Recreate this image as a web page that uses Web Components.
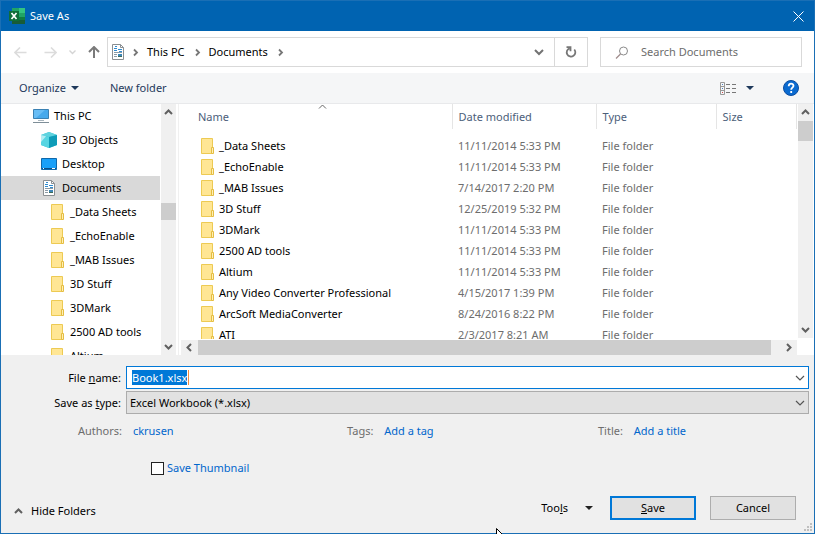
<!DOCTYPE html>
<html lang="en">
<head>
<meta charset="utf-8">
<title>Save As</title>
<style>
  html, body { height: 100%; margin: 0; }
  body { font: 11px/16px "Noto Sans", "Open Sans", sans-serif; color: #000; overflow: hidden; }
</style>
</head>
<body>
<save-dialog></save-dialog>

<template id="save-dialog">
  <style>
    :host { display: flex; flex-direction: column; box-sizing: border-box; height: 100vh; border: 1px solid #1a6fb5; background: #f0f0f0; }
    .panes { flex: 1; min-height: 0; display: grid; grid-template-columns: 178px minmax(0, 1fr); background: #fff; }
    .pointer { position: absolute; left: 496px; top: 528px; }
  </style>
  <title-bar>Save As</title-bar>
  <address-row></address-row>
  <command-bar></command-bar>
  <div class="panes">
    <folder-tree></folder-tree>
    <file-list></file-list>
  </div>
  <save-form></save-form>
  <dialog-footer></dialog-footer>
  <svg class="pointer" width="8" height="6"><path d="M.5 6V.5L6 6" fill="#fff" stroke="#000"/></svg>
</template>

<template id="title-bar">
  <style>
    :host { display: flex; align-items: center; gap: 5px; height: 30px; padding-left: 8px; background: #0063b1; color: #fff; }
    h1 { flex: 1; margin: 0; font: inherit; }
    button { display: grid; place-items: center; width: 31px; height: 30px; padding: 0; border: 0; background: none; color: inherit; }
  </style>
  <svg width="16" height="16" viewBox="0 0 16 16">
    <path fill="#21a366" d="M3 0h7v5H3z"/><path fill="#33c481" d="M10 0h6v5h-6z"/>
    <path fill="#107c41" d="M3 5h7v5H3z"/><path fill="#21a366" d="M10 5h6v4h-6z"/>
    <path fill="#185c37" d="M3 10h13v6H3z"/><path fill="#107c41" d="M10 9h6v3h-6z"/>
    <path fill="#0f6d39" d="M0 3h10v10H0z"/>
    <path d="M2.500 5l5 6M7.500 5l-5 6" stroke="#fff" stroke-width="1.700" fill="none"/>
  </svg>
  <h1><slot></slot></h1>
  <button aria-label="Close"><svg width="11" height="11"><path d="M.5.500l10 10M10.500.500l-10 10" stroke="#fff" fill="none"/></svg></button>
</template>

<template id="address-row">
  <style>
    :host { display: flex; align-items: center; height: 42px; padding: 0 12px 0 8px; background: #fff; }
    button { display: grid; place-items: center; padding: 0; border: 0; background: none; height: 28px; color: #6d6d6d; font: inherit; }
    .nav { width: 22px; }
    .back { margin-right: 8px; }
    .path { flex: 1; display: flex; align-items: center; height: 28px; margin: 0 12px 0 2px; border: 1px solid #d9d9d9; padding-left: 3px; }
    .path a { color: #000; text-decoration: none; margin: 0 10px 0 9px; }
    .path doc-icon { margin-right: 8px; }
    .grow { flex: 1; }
    .drop { width: 30px; }
    .refresh { width: 33px; border-left: 1px solid #d9d9d9; }
    .search { display: flex; align-items: center; gap: 12px; box-sizing: border-box; width: 202px; height: 30px; border: 1px solid #d9d9d9; padding-left: 14px; }
    input { flex: 1; min-width: 0; border: 0; padding: 0; outline: 0; font: inherit; background: none; }
    input::placeholder { color: #6d6d6d; opacity: 1; }
  </style>
  <button class="nav back" aria-label="Back"><svg width="13" height="11"><path d="M6 .5l-5 5 5 5M1 5.500h11.500" fill="none" stroke="#dcdcdc" stroke-width="1.600"/></svg></button>
  <button class="nav" aria-label="Forward"><svg width="13" height="11"><path d="M7 .5l5 5-5 5M12 5.500H.5" fill="none" stroke="#dcdcdc" stroke-width="1.600"/></svg></button>
  <button class="nav" aria-label="Recent locations"><svg width="7" height="5"><path d="M.5.500l3 3 3-3" fill="none" stroke="#d4d4d4" stroke-width="1.400"/></svg></button>
  <button class="nav" aria-label="Up"><svg width="12" height="12"><path d="M1 6l5-5 5 5M6 1v11" fill="none" stroke="#7a7a7a" stroke-width="2"/></svg></button>
  <nav class="path" aria-label="Address">
    <doc-icon></doc-icon>
    <chevron-icon dir="right"></chevron-icon><a href="#pc">This PC</a>
    <chevron-icon dir="right"></chevron-icon><a href="#documents">Documents</a>
    <chevron-icon dir="right"></chevron-icon><span class="grow"></span>
    <button class="drop" aria-label="Previous locations"><svg width="10" height="7"><path d="M1 1l4 4 4-4" fill="none" stroke="#737373" stroke-width="2"/></svg></button>
    <button class="refresh" aria-label="Refresh"><svg width="12" height="12"><path d="M4.500 2.300A4.300 4.300 0 1 0 9.300 3.500M1.500 1.200h4v4" fill="none" stroke="#777" stroke-width="1.800"/></svg></button>
  </nav>
  <div class="search">
    <svg width="14" height="13"><circle cx="8.500" cy="5" r="4" fill="none" stroke="#8a8a8a"/><path d="M5.500 8L1 12.500" stroke="#a08c8c" stroke-width="1.300"/></svg>
    <input type="search" placeholder="Search Documents" aria-label="Search Documents">
  </div>
</template>

<template id="command-bar">
  <style>
    :host { display: flex; align-items: center; box-sizing: border-box; height: 31px; padding: 0 15px 0 18px; background: #f5f6f7; border-bottom: 1px solid #e8e9eb; }
    button { display: flex; align-items: center; gap: 5px; padding: 0; border: 0; background: none; color: #1e395b; font: inherit; }
    .new { margin-left: 31px; }
    .view { margin-left: auto; gap: 9px; }
    .help { margin-left: 29px; }
  </style>
  <button>Organize <svg width="8" height="4"><path d="M0 0h8L4 4z" fill="#1e395b"/></svg></button>
  <button class="new">New folder</button>
  <button class="view" aria-label="Change view">
    <svg width="17" height="13">
      <path d="M.5.500h4v12h-4zM.5 4.500h4M.5 8.500h4" fill="none" stroke="#989898"/>
      <path d="M2 2h1v1H2z" fill="#4a7fc0"/><path d="M2 6h1v1H2z" fill="#4a7fc0"/><path d="M2 10h1v1H2z" fill="#d04848"/>
      <path d="M6 2.500h4M12 2.500h4M6 6.500h4M12 6.500h4M6 10.500h4M12 10.500h4" stroke="#777"/>
    </svg>
    <svg width="8" height="4"><path d="M0 0h8L4 4z" fill="#1e395b"/></svg>
  </button>
  <button class="help" aria-label="Help">
    <svg width="16" height="16"><circle cx="8" cy="8" r="7.500" fill="#0a6ad0" stroke="#0b4da0"/><path d="M5.700 6.200C5.700 2.800 10.500 3 10.500 5.800 10.500 7.700 8.200 7.700 8.200 9.800M8.200 11v2" fill="none" stroke="#fff" stroke-width="1.800"/></svg>
  </button>
</template>

<template id="doc-icon">
  <style>:host { display: block; width: 14px; height: 16px; } svg { display: block; }</style>
  <svg width="14" height="16">
    <path d="M1.500.500h8l3 3v12h-11z" fill="#fff" stroke="#8b8f92"/><path d="M9.500.500v3h3" fill="none" stroke="#8b8f92"/>
    <path d="M3 4.500h3M4 2.500h2M7 5.500h4M3 6.500h3M8 7.500h3" stroke="#2f8bd0"/>
    <path d="M3 8.500h8M3 10.500h3M3 12.500h3" stroke="#8b9aa5"/><path d="M7 10h4v3H7z" fill="#3e86b8"/><path d="M7 12h4v1H7z" fill="#3b6b57"/>
  </svg>
</template>

<template id="folder-icon">
  <style>:host { display: block; width: 13px; height: 16px; } svg { display: block; }</style>
  <svg width="13" height="16">
    <path d="M.5.500h11v15H.5z" fill="#ffe694" stroke="#edca53"/>
    <path d="M10.500 9.500h2v6h-2z" fill="#fff0b4" stroke="#e5bd42"/>
  </svg>
</template>

<template id="pc-icon">
  <style>:host { display: block; width: 16px; height: 16px; } svg { display: block; }</style>
  <svg width="16" height="16"><path d="M.5 1.500h15v9H.5z" fill="#46a9ec" stroke="#3a81b3"/><path d="M1 2h11L3 10H1z" fill="#68bdf5"/><path d="M5 12.500h6" stroke="#a8b5bd"/><path d="M0 14.500h16" stroke="#7e8e98"/></svg>
</template>
<template id="cube-icon">
  <style>:host { display: block; width: 16px; height: 16px; } svg { display: block; }</style>
  <svg width="16" height="16"><path d="M8 0l8 3v10l-8 3-8-3V3z" fill="#36c3d8"/><path d="M8 0l8 3-8 2-8-2z" fill="#5fd3de"/><path d="M8 5l8-2v10l-8 3z" fill="#0e9cb8"/><path d="M0 3l8 2v11l-8-3z" fill="#57d5e2"/><path d="M0 3l5 1.300L0 10z" fill="#b3eef4"/></svg>
</template>
<template id="desktop-icon">
  <style>:host { display: block; width: 16px; height: 16px; } svg { display: block; }</style>
  <svg width="16" height="16"><path d="M.5 2.500h15v11H.5z" fill="#19a0f8" stroke="#0f68aa"/><path d="M1 12h14v1H1z" fill="#0a4f87"/><path d="M2 12h1v1H2zM11 12h3v1h-3z" fill="#fff"/></svg>
</template>

<template id="chevron-icon">
  <style>
    :host { display: block; width: 9px; height: 9px; }
    svg { display: block; width: 9px; height: 9px; overflow: visible; }
    :host([dir="right"]) { width: 5px; }
    :host([dir="right"]) svg { transform: rotate(90deg); margin-left: -2px; }
    :host([dir="left"]) svg { transform: rotate(-90deg); }
    :host([dir="east"]) svg { transform: rotate(90deg); }
    :host([dir="down"]) svg { transform: rotate(180deg); }
    path { fill: none; stroke: #606060; stroke-width: 2; }
    :host([dir="right"]) path { stroke: #777; d: path("M1.500 6L4.500 3 7.500 6"); stroke-width: 1.800; }
  </style>
  <svg viewBox="0 0 9 9"><path d="M1 6l3.500-3.500L8 6"/></svg>
</template>

<template id="scroll-bar">
  <style>
    :host { display: flex; flex-direction: column; background: #f0f0f0; }
    :host([horizontal]) { flex-direction: row; }
    button { flex: none; display: grid; place-items: center; width: 15px; height: 17px; border: 0; padding: 0; background: none; }
    :host([horizontal]) button { width: 17px; height: 15px; }
    .track { flex: 1; display: flex; flex-direction: inherit; }
    .before { flex: var(--before, 0); }
    .thumb { flex: var(--thumb, 1); background: #cdcdcd; }
    .after { flex: var(--after, 0); }
  </style>
  <button class="prev" aria-label="Scroll back"><chevron-icon></chevron-icon></button>
  <div class="track"><div class="before"></div><div class="thumb"></div><div class="after"></div></div>
  <button class="next" aria-label="Scroll forward"><chevron-icon dir="down"></chevron-icon></button>
</template>

<template id="folder-tree">
  <style>
    :host { display: flex; min-height: 0; border-right: 1px solid #f0f0f0; }
    ul { flex: 1; min-width: 0; margin: 0; padding: 0; list-style: none; overflow: hidden; }
    li { display: flex; align-items: center; gap: 5px; height: 24px; padding-left: 32px; }
    a { color: #000; text-decoration: none; white-space: nowrap; }
    .l2 { padding-left: 40px; }
    .l3 { padding-left: 50px; gap: 6px; }
    .doc { gap: 6px; padding-left: 41px; }
    .on { background: #d9d9d9; }
    scroll-bar { flex: none; margin: 0 2px 0 1px; --before: 82; --thumb: 17; --after: 118; }
  </style>
  <ul>
    <li><pc-icon></pc-icon><a href="#pc">This PC</a></li>
    <li class="l2"><cube-icon></cube-icon><a href="#3d">3D Objects</a></li>
    <li class="l2"><desktop-icon></desktop-icon><a href="#desktop">Desktop</a></li>
    <li class="doc on"><doc-icon></doc-icon><a href="#documents" aria-current="true">Documents</a></li>
  </ul>
  <scroll-bar></scroll-bar>
</template>

<template id="file-list">
  <style>
    :host { display: grid; grid-template: minmax(0, 1fr) 16px / minmax(0, 1fr) 16px; min-height: 0; padding-left: 2px; }
    .view { overflow: hidden; padding-right: 1px; }
    table { width: 100%; border-collapse: collapse; table-layout: fixed; }
    th { position: relative; height: 25px; padding: 0 0 0 6px; font-weight: normal; text-align: left; color: #4c607a; border-right: 1px solid #e5e5e5; box-sizing: border-box; }
    th:first-child { padding-left: 17px; }
    thead svg { position: absolute; left: 137px; top: 0; }
    th:nth-child(1) { width: 271px; } th:nth-child(2) { width: 144px; } th:nth-child(3) { width: 120px; }
    tbody::before { content: ""; display: block; height: 6px; }
    td { height: 21px; padding: 0 0 0 6px; color: #6d6d6d; white-space: nowrap; }
    td:first-child { padding-left: 20px; color: #000; }
    .name { display: flex; align-items: center; gap: 5px; }
    .v { margin-right: 1px; margin-bottom: 1px; --before: 0; --thumb: 20; --after: 181; }
    .h { margin-top: 1px; margin-right: 1px; --thumb: 573; --after: 9; }
  </style>
  <div class="view">
    <table>
      <thead><tr><th>Name<svg width="9" height="5"><path d="M1 4.500L4.500 1 8 4.500" fill="none" stroke="#666"/></svg></th><th>Date modified</th><th>Type</th><th>Size</th></tr></thead>
      <tbody></tbody>
    </table>
  </div>
  <scroll-bar class="v"></scroll-bar>
  <scroll-bar class="h" horizontal></scroll-bar>
</template>

<template id="save-form">
  <style>
    :host { display: grid; grid-template-columns: 120px minmax(0, 1fr); column-gap: 5px; row-gap: 2px; padding: 11px 5px 0 0; }
    label { justify-self: end; align-self: center; }
    .box { box-sizing: border-box; height: 23px; display: grid; align-items: center; border: 1px solid #0078d7; background: #fff; }
    .box > * { grid-area: 1 / 1; }
    .box svg { justify-self: end; margin-right: 3px; pointer-events: none; }
    .caret { width: 1px; height: 15px; margin-left: 61px; background: #f58a3c; }
    input.name { border: 0; outline: 0; padding: 0 20px 0 5px; font: inherit; background: none; width: 100%; box-sizing: border-box; height: 21px; }
    input.name::selection { background: #0078d7; color: #fff; }
    .type { border-color: #acacac; background: #e1e1e1; }
    select { appearance: none; border: 0; outline: 0; padding: 0 20px 0 3px; font: inherit; color: #000; background: none; height: 21px; }
    .meta { grid-column: 1 / -1; display: grid; grid-template-columns: 269fr 251fr 211fr; padding: 7px 0 0 77px; color: #6d6d6d; height: 18px; }
    a, .thumb label { color: #0066cc; text-decoration: none; }
    .meta a { margin-left: 8px; }
    .thumb { grid-column: 1 / -1; display: flex; align-items: center; gap: 3px; padding: 17px 0 0 150px; }
    .thumb input { appearance: none; box-sizing: border-box; width: 13px; height: 13px; margin: 0; border: 1px solid #222; background: #fff; }
  </style>
  <label for="name">File <u>n</u>ame:</label>
  <div class="box"><input id="name" class="name" value="Book1.xlsx"><span class="caret"></span><svg width="10" height="6"><path d="M1 1l4 4 4-4" fill="none" stroke="#555" stroke-width="1.200"/></svg></div>
  <label for="type">Save as <u>t</u>ype:</label>
  <div class="box type"><select id="type"><option>Excel Workbook (*.xlsx)</option></select><svg width="10" height="6"><path d="M1 1l4 4 4-4" fill="none" stroke="#555" stroke-width="1.200"/></svg></div>
  <div class="meta">
    <span>Authors: <a href="#authors">ckrusen</a></span>
    <span>Tags: <a href="#tags">Add a tag</a></span>
    <span>Title: <a href="#title">Add a title</a></span>
  </div>
  <div class="thumb"><input type="checkbox" id="thumb"><label for="thumb">Save Thumbnail</label></div>
</template>

<template id="dialog-footer">
  <style>
    :host { display: flex; align-items: flex-start; height: 37px; padding: 20px 2px 0 13px; }
    button { display: flex; align-items: center; justify-content: center; box-sizing: border-box; height: 24px; padding: 0; border: 0; background: none; color: #000; font: inherit; }
    .hide { gap: 8px; margin-right: auto; height: 30px; }
    .tools { gap: 17px; margin-right: 17px; }
    .push { width: 86px; background: #e1e1e1; border: 1px solid #adadad; }
    .main { border: 2px solid #0078d7; margin-right: 14px; }
    .grip { align-self: flex-end; margin-left: 8px; }
  </style>
  <button class="hide"><chevron-icon></chevron-icon>Hide Folders</button>
  <button class="tools"><span>Too<u>l</u>s</span><svg width="8" height="4"><path d="M0 0h8L4 4z" fill="#222"/></svg></button>
  <button class="push main"><span><u>S</u>ave</span></button>
  <button class="push">Cancel</button>
  <svg class="grip" width="8" height="10"><path d="M6 0h2v2H6zM3 3h2v2H3zM6 3h2v2H6zM0 6h2v2H0zM3 6h2v2H3zM6 6h2v2H6z" fill="#bfbfbf"/></svg>
</template>

<script>
  class Templated extends HTMLElement {
    constructor() {
      super();
      this.attachShadow({ mode: 'open' }).append(document.getElementById(this.localName).content.cloneNode(true));
    }
  }
  const folders = [
    ['_Data Sheets', '11/11/2014 5:33 PM'], ['_EchoEnable', '11/11/2014 5:33 PM'],
    ['_MAB Issues', '7/14/2017 2:20 PM'], ['3D Stuff', '12/25/2019 5:32 PM'],
    ['3DMark', '11/11/2014 5:33 PM'], ['2500 AD tools', '11/11/2014 5:33 PM'],
    ['Altium', '11/11/2014 5:33 PM'], ['Any Video Converter Professional', '4/15/2017 1:39 PM'],
    ['ArcSoft MediaConverter', '8/24/2016 8:22 PM'], ['ATI', '2/3/2017 8:21 AM'],
  ];
  class FolderTree extends Templated {
    constructor() {
      super();
      this.shadowRoot.querySelector('ul').insertAdjacentHTML('beforeend', folders.slice(0, 7).map(([n]) =>
        `<li class="l3"><folder-icon></folder-icon><a href="#folder">${n}</a></li>`).join(''));
    }
  }
  class FileList extends Templated {
    constructor() {
      super();
      this.shadowRoot.querySelector('tbody').innerHTML = folders.map(([n, d]) =>
        `<tr><td><div class="name"><folder-icon></folder-icon>${n}</div></td><td>${d}</td><td>File folder</td><td></td></tr>`).join('');
    }
  }
  class ScrollBar extends Templated {
    connectedCallback() {
      if (!this.hasAttribute('horizontal')) return;
      this.shadowRoot.querySelector('.prev chevron-icon').setAttribute('dir', 'left');
      this.shadowRoot.querySelector('.next chevron-icon').setAttribute('dir', 'east');
    }
  }
  class SaveForm extends Templated {
    connectedCallback() {
      const name = this.shadowRoot.getElementById('name');
      name.focus();
      name.select();
    }
  }
  for (const tag of ['doc-icon', 'folder-icon', 'pc-icon', 'cube-icon', 'desktop-icon', 'chevron-icon', 'title-bar', 'address-row', 'command-bar', 'dialog-footer'])
    customElements.define(tag, class extends Templated {});
  customElements.define('scroll-bar', ScrollBar);
  customElements.define('folder-tree', FolderTree);
  customElements.define('file-list', FileList);
  customElements.define('save-form', SaveForm);
  customElements.define('save-dialog', class extends Templated {});
</script>
</body>
</html>
